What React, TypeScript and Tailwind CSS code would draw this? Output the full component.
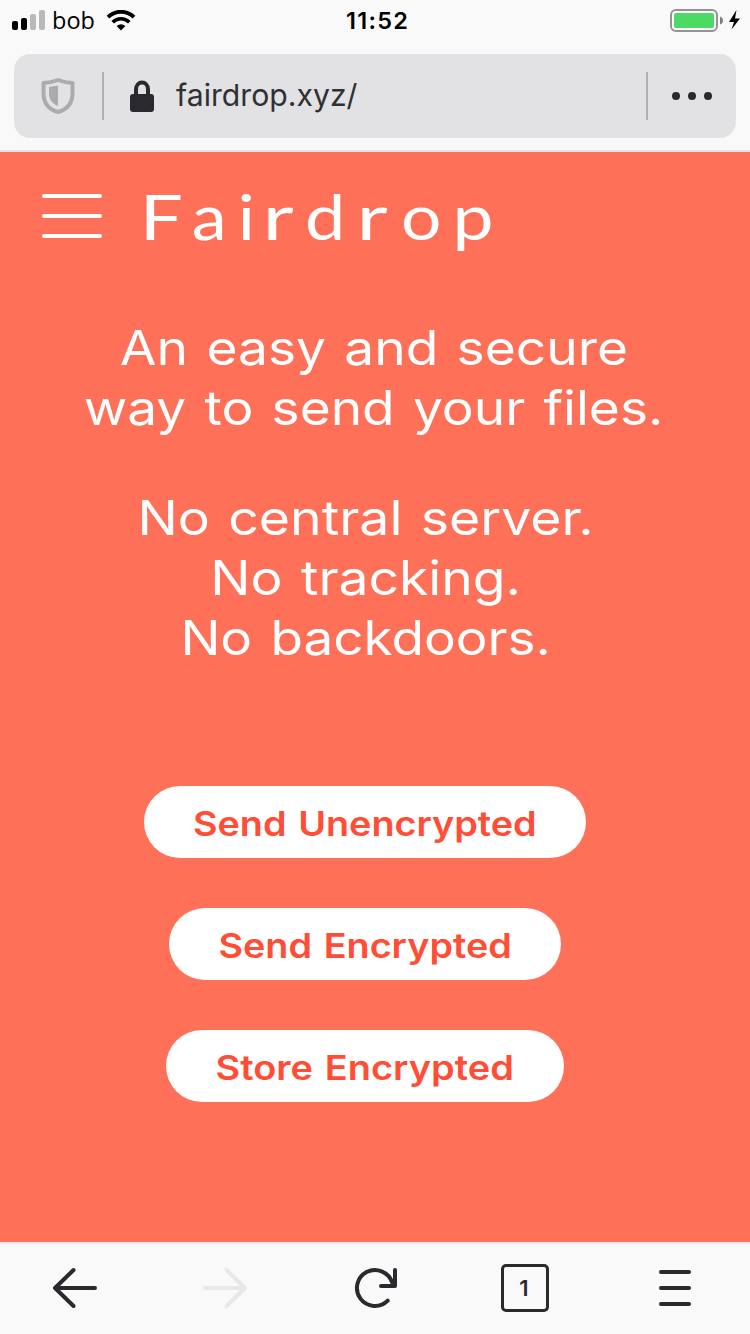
import React from "react";

const logoLetters = [
  { char: "F", cell: "w-[43px]", glyph: "scale-x-125" },
  { char: "a", cell: "w-[53px]", glyph: "scale-x-[1.15]" },
  { char: "i", cell: "w-[20px]", glyph: "scale-x-120" },
  { char: "r", cell: "w-[45px]", glyph: "scale-x-140" },
  { char: "d", cell: "w-[49px]", glyph: "scale-x-[1.18]" },
  { char: "r", cell: "w-[45px]", glyph: "scale-x-140" },
  { char: "o", cell: "w-[52px]", glyph: "scale-x-[1.17]" },
  { char: "p", cell: "w-[52px]", glyph: "scale-x-[1.2]" },
];

function StatusBar() {
  return (
    <div className="flex h-10 items-center pl-3 pr-2 text-black">
      <div className="flex w-[330px] items-center">
        <svg width="33" height="20" viewBox="0 0 33 20">
          <rect x="0" y="11" width="6" height="9" rx="2" fill="#000" />
          <rect x="9" y="8" width="6" height="12" rx="2" fill="#000" />
          <rect x="18" y="4" width="6" height="16" rx="2" fill="#b9b9ba" />
          <rect x="27" y="0" width="6" height="20" rx="2" fill="#b9b9ba" />
        </svg>
        <span className="ml-[7px] w-[48px] font-['Open_Sans',sans-serif] text-[23.5px] leading-10">bob</span>
        <svg className="ml-[6px]" width="30" height="21" viewBox="0 0 30 21" fill="none" stroke="#000">
          <path d="M2 7.2C9.200-.1 20.800-.1 28 7.200" strokeWidth="3.800" />
          <path d="M6.700 12.200C11.400 7.500 18.600 7.500 23.300 12.200" strokeWidth="3.600" />
          <path d="M15 20.500 10.600 16Q15 12.300 19.400 16Z" fill="#000" stroke="none" />
        </svg>
      </div>
      <span className="w-[74px] whitespace-nowrap pl-1 pt-0.5 font-['Inter',sans-serif] text-[23.5px] font-semibold leading-10 tracking-[1.3px]">
        11:52
      </span>
      <svg className="ml-auto mt-0.5" width="72" height="24" viewBox="0 0 72 24">
        <rect x="1" y="1" width="46" height="21" rx="5" fill="#fff" stroke="#949494" strokeWidth="2" />
        <rect x="4" y="4" width="40" height="15" rx="2" fill="#4cd964" />
        <path d="M50 7.500Q53 8.500 53 11.500T50 15.500Z" fill="#808080" />
        <path d="M66.500 1 59 13H64L61.500 20.500 70 9.500H65Z" fill="#000" />
      </svg>
    </div>
  );
}

function AddressBar() {
  return (
    <div className="mx-[14px] mt-[14px] flex h-[84px] items-center rounded-[16px] bg-[#e2e2e4]">
      <svg className="ml-[27px]" width="34" height="36" viewBox="0 0 34 36">
        <path d="M2.500 5Q10 4.600 17 2Q24 4.600 31.500 5V15C31.500 25 26 31.500 17 34C8 31.500 2.500 25 2.500 15Z" fill="none" stroke="#ababad" strokeWidth="4" strokeLinejoin="round" />
        <path d="M8 9 17 7.500V28C10.500 25.500 8 21 8 15Z" fill="#ababad" />
      </svg>
      <div className="ml-[27px] h-12 w-0.5 bg-[#b1b1b3]" />
      <svg className="ml-[26px]" width="24" height="32" viewBox="0 0 24 32">
        <path d="M6 16V9.500C6 .2 18 .2 18 9.500V16" fill="none" stroke="#2a2a2e" strokeWidth="4" />
        <rect x="0" y="14" width="24" height="18" rx="3" fill="#2a2a2e" />
      </svg>
      <span className="ml-[22px] pb-0.5 font-['Inter',sans-serif] text-[30.2px] leading-[82px] text-[#303032]">fairdrop.xyz/</span>
      <div className="ml-auto h-12 w-0.5 bg-[#b1b1b3]" />
      <svg className="ml-6 mr-6" width="40" height="8" viewBox="0 0 40 8" fill="#2a2a2e">
        <circle cx="4" cy="4" r="4" />
        <circle cx="20" cy="4" r="4" />
        <circle cx="36" cy="4" r="4" />
      </svg>
    </div>
  );
}

function Line({ text, stretch }: { text: string; stretch: string }) {
  return (
    <div className="flex justify-center">
      <span className={"whitespace-nowrap " + stretch}>{text}</span>
    </div>
  );
}

function ActionButton({ label, width, stretch }: { label: string; width: string; stretch: string }) {
  return (
    <button className={"flex h-[72px] items-center justify-center rounded-full bg-white pt-0.5 font-semibold " + width}>
      <span className={"whitespace-nowrap [word-spacing:2px] " + stretch}>{label}</span>
    </button>
  );
}

function BottomBar() {
  return (
    <nav className="grid h-[92px] shrink-0 grid-cols-5 place-items-center border-t-2 border-[#ececee] bg-[#f9f9fa] pb-0.5">
      <svg width="44" height="42" viewBox="0 0 44 42" fill="none" stroke="#2a2a2e" strokeWidth="4" strokeLinecap="round" strokeLinejoin="round">
        <path d="M42 21H2M20.500 3 2 21 20.500 39" />
      </svg>
      <svg width="44" height="42" viewBox="0 0 44 42" fill="none" stroke="#e8e8ea" strokeWidth="4" strokeLinecap="round" strokeLinejoin="round">
        <path d="M2 21H42M23.500 3 42 21 23.500 39" />
      </svg>
      <svg width="44" height="42" viewBox="0 0 44 42" fill="none" stroke="#2a2a2e" strokeWidth="4" strokeLinecap="round" strokeLinejoin="round">
        <path d="M34.700 33.700A18 18 0 1 1 39 15.200L41 18" />
        <path d="M42 3V19H28" />
        <path d="M36.500 19 42 13V19Z" fill="#2a2a2e" stroke="none" />
      </svg>
      <div className="flex size-12 items-center justify-center rounded-[5px] border-[3px] border-[#2a2a2e] pr-0.5 font-['Inter',sans-serif] text-[22px] font-semibold text-[#2a2a2e]">
        1
      </div>
      <div className="flex w-8 flex-col gap-3">
        <div className="h-1 rounded-full bg-[#2a2a2e]" />
        <div className="h-1 rounded-full bg-[#2a2a2e]" />
        <div className="h-1 rounded-full bg-[#2a2a2e]" />
      </div>
    </nav>
  );
}

export default function App() {
  return (
    <div className="flex h-[1334px] w-[750px] flex-col overflow-hidden bg-[#f9f9fa]">
      <header className="h-[152px] shrink-0 border-b-2 border-[#e1e1e6]">
        <StatusBar />
        <AddressBar />
      </header>

      <main className="flex-1 bg-[#ff7058] font-['Inter',sans-serif] text-white">
        <div className="flex h-[150px] items-start pl-[42px]">
          <div className="mt-[42px] flex w-[60px] flex-col gap-4">
            <div className="h-1 rounded-full bg-white" />
            <div className="h-1 rounded-full bg-white" />
            <div className="h-1 rounded-full bg-white" />
          </div>
          <h1 className="ml-[38px] mt-[25px] flex font-['Lato',sans-serif] text-[61px] leading-[80px]">
            {logoLetters.map((l, i) => (
              <span key={i} className={"flex justify-center " + l.cell}>
                <span className={l.glyph}>{l.char}</span>
              </span>
            ))}
          </h1>
        </div>

        <div className="mt-4 text-[48px] leading-[60px] [word-spacing:3px]">
          <p className="w-[748px]">
            <Line text="An easy and secure" stretch="scale-x-[1.11]" />
            <Line text="way to send your files." stretch="scale-x-[1.108]" />
          </p>
          <p className="mt-[50px] w-[731px]">
            <Line text="No central server." stretch="scale-x-[1.115]" />
            <Line text="No tracking." stretch="scale-x-[1.112]" />
            <Line text="No backdoors." stretch="scale-x-[1.105]" />
          </p>
        </div>

        <div className="mt-[118px] flex w-[730px] flex-col items-center gap-[50px] text-[34px] text-[#ff4d36]">
          <ActionButton label="Send Unencrypted" width="w-[442px]" stretch="scale-x-[1.11]" />
          <ActionButton label="Send Encrypted" width="w-[392px]" stretch="scale-x-[1.11]" />
          <ActionButton label="Store Encrypted" width="w-[398px]" stretch="scale-x-[1.116]" />
        </div>
      </main>

      <BottomBar />
    </div>
  );
}
